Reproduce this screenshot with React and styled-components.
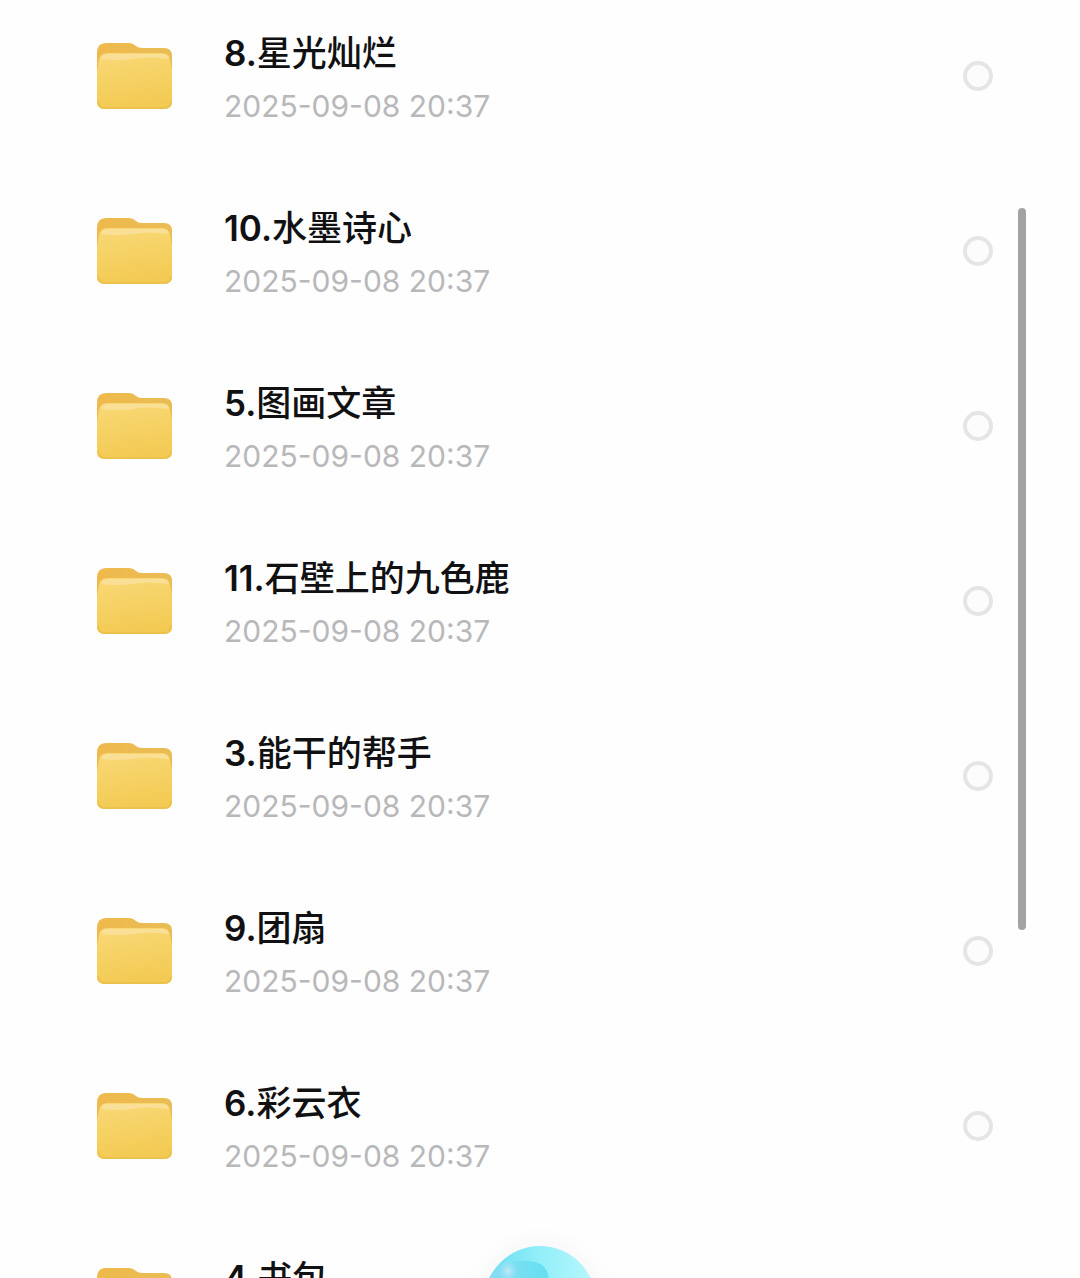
import React from 'react';
import styled, { createGlobalStyle } from 'styled-components';

const GlobalStyle = createGlobalStyle`
    body {
        margin: 0;
        background: #fefefe;
        font-family: Inter, "Noto Sans CJK SC", sans-serif;
    }
`;

const Page = styled.main`
    position: relative;
    height: 100vh;
    overflow: hidden;
    background: #fefefe;
`;

const FolderList = styled.ul`
    display: flex;
    flex-direction: column;
    gap: 79px;
    margin: 0;
    padding: 28px 87px 0 96px;
    list-style: none;
`;

const FolderRow = styled.label`
    display: flex;
    align-items: center;
    cursor: pointer;
`;

const FolderSvg = styled.svg`
    flex: none;
    width: 78px;
    height: 70px;
    margin-right: 50px;
`;

const FolderInfo = styled.span`
    display: flex;
    flex: 1;
    flex-direction: column;
    gap: 10px;
    min-width: 0;
`;

const FolderName = styled.span`
    color: #111113;
    font-size: 35px;
    font-weight: 500;
    line-height: 50px;
    white-space: nowrap;
`;

const FolderNumber = styled.span`
    font-weight: 600;
`;

const FolderDate = styled.time`
    color: #b8b8bb;
    font-size: 30px;
    font-weight: 400;
    line-height: 36px;
    white-space: nowrap;
`;

const Check = styled.input`
    appearance: none;
    flex: none;
    width: 30px;
    height: 30px;
    margin: 0;
    border: 4px solid #e5e5e8;
    border-radius: 50%;
    background: #fcfcfd;

    &:checked {
        border-color: #35cfe8;
        background: #35cfe8;
    }
`;

const ScrollThumb = styled.div`
    position: absolute;
    top: 208px;
    right: 54px;
    width: 8px;
    height: 722px;
    border-radius: 4px;
    background: #a3a3a3;
`;

const BallButton = styled.button`
    position: absolute;
    bottom: -80px;
    left: 50%;
    width: 112px;
    height: 112px;
    padding: 0;
    border: 0;
    border-radius: 50%;
    background: none;
    box-shadow: 0 0 24px 4px #f6f6f9;
    transform: translateX(-50%);
`;

const folders = [
    { id: 8, name: '星光灿烂' },
    { id: 10, name: '水墨诗心' },
    { id: 5, name: '图画文章' },
    { id: 11, name: '石壁上的九色鹿' },
    { id: 3, name: '能干的帮手' },
    { id: 9, name: '团扇' },
    { id: 6, name: '彩云衣' },
    { id: 4, name: '书包' },
];

function FolderIcon() {
    return (
        <FolderSvg viewBox="0 0 78 70" aria-hidden="true">
            <path d="M1 12 Q1 2 10 2 H33 Q37 2 40 5 Q42 7 46 7 H68 Q76 7 76 15 V30 H1Z" fill="url(#folderBack)" />
            <path d="M1 30 L3 19 Q4 12 12 12 H66 Q73 12 74 19 L76 30 V60 Q76 68 68 68 H9 Q1 68 1 60Z" fill="url(#folderFront)" />
            <path d="M5 18 Q6 13 12 13 H66 Q72 13 73 18 Q50 15 37 18 Q20 20 5 18Z" fill="#fbe2a6" opacity="0.7" />
            <path d="M2 60 Q2 67 9 67 H68 Q75 67 75 60" fill="none" stroke="#ecc24c" strokeWidth="2" />
        </FolderSvg>
    );
}

function Ball() {
    return (
        <svg width="112" height="112" viewBox="0 0 116 116" aria-hidden="true">
            <defs>
                <linearGradient id="ballFill" x1="0" y1="0" x2="1" y2="0">
                    <stop offset="0" stopColor="#66dbee" />
                    <stop offset="0.5" stopColor="#92eff9" />
                    <stop offset="1" stopColor="#b9f7fc" />
                </linearGradient>
                <linearGradient id="ballBand" x1="0" y1="0" x2="1" y2="0">
                    <stop offset="0" stopColor="#86dcf1" />
                    <stop offset="1" stopColor="#66e0f2" />
                </linearGradient>
                <radialGradient id="ballShine">
                    <stop offset="0" stopColor="#c3ebfa" />
                    <stop offset="1" stopColor="#8fe0f4" stopOpacity="0" />
                </radialGradient>
            </defs>
            <circle cx="58" cy="58" r="58" fill="url(#ballFill)" />
            <path d="M6 32 Q14 18 32 16 Q66 12 67 34 Q56 48 6 42Z" fill="url(#ballBand)" />
            <ellipse cx="25" cy="26" rx="12" ry="13" fill="url(#ballShine)" />
        </svg>
    );
}

function App() {
    return (
        <Page>
            <GlobalStyle />
            {/* gradients shared by every folder icon */}
            <svg width="0" height="0" style={{ position: 'absolute' }} aria-hidden="true">
                <defs>
                    <linearGradient id="folderBack" x1="0" y1="0" x2="1" y2="0">
                        <stop offset="0" stopColor="#efb94c" />
                        <stop offset="1" stopColor="#e9bd55" />
                    </linearGradient>
                    <linearGradient id="folderFront" x1="0" y1="0" x2="0.2" y2="1">
                        <stop offset="0" stopColor="#f9d877" />
                        <stop offset="0.5" stopColor="#f6d265" />
                        <stop offset="1" stopColor="#f3ca54" />
                    </linearGradient>
                </defs>
            </svg>
            <FolderList>
                {folders.map((folder) => (
                    <li key={folder.id}>
                        <FolderRow htmlFor={`folder-${folder.id}`}>
                            <FolderIcon />
                            <FolderInfo>
                                <FolderName>
                                    <FolderNumber>{folder.id}.</FolderNumber>
                                    {folder.name}
                                </FolderName>
                                <FolderDate dateTime="2025-09-08T20:37">2025-09-08 20:37</FolderDate>
                            </FolderInfo>
                            <Check type="checkbox" id={`folder-${folder.id}`} />
                        </FolderRow>
                    </li>
                ))}
            </FolderList>
            <ScrollThumb />
            <BallButton type="button" aria-label="助手">
                <Ball />
            </BallButton>
        </Page>
    );
}

export default App;
